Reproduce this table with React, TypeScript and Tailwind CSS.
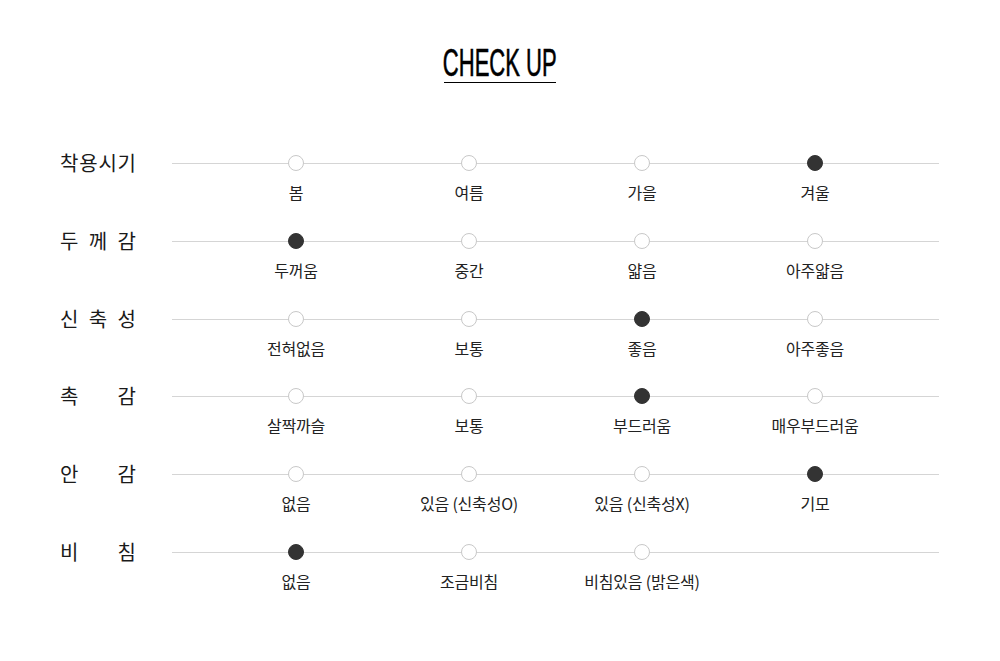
const ROWS: { label: string; options: string[]; selected: number }[] = [
  { label: "착용시기", options: ["봄", "여름", "가을", "겨울"], selected: 3 },
  { label: "두께감", options: ["두꺼움", "중간", "얇음", "아주얇음"], selected: 0 },
  { label: "신축성", options: ["전혀없음", "보통", "좋음", "아주좋음"], selected: 2 },
  { label: "촉감", options: ["살짝까슬", "보통", "부드러움", "매우부드러움"], selected: 2 },
  { label: "안감", options: ["없음", "있음 (신축성O)", "있음 (신축성X)", "기모"], selected: 3 },
  { label: "비침", options: ["없음", "조금비침", "비침있음 (밝은색)"], selected: 0 },
];

const CheckRow = ({ label, options, selected }: { label: string; options: string[]; selected: number }) => (
  <div className="flex items-start h-[77.8px]">
    <div className="w-[76px] ml-[60px] mr-[36px] flex justify-between text-[20px] leading-[24px] text-[#1a1a1a] -mt-[12px]">
      {label.split("").map((ch, i) => (
        <span key={i}>{ch}</span>
      ))}
    </div>
    <div className="relative w-[767px]">
      <div className="absolute left-0 right-0 top-0 h-px bg-[#d5d5d5]" />
      <div className="relative grid grid-cols-[repeat(4,173px)] px-[37.5px] -mt-[8px]">
        {options.map((opt, i) => (
          <div key={opt} className="flex flex-col items-center">
            <div
              className={
                i === selected
                  ? "w-4 h-4 rounded-full bg-[#333] border border-[#333]"
                  : "w-4 h-4 rounded-full bg-white border border-[#c8c8c8]"
              }
            />
            <span className="mt-[9px] text-[16px] leading-[24px] text-[#222] whitespace-nowrap tracking-[-0.2px]">
              {opt}
            </span>
          </div>
        ))}
      </div>
    </div>
  </div>
);

export default function App() {
  return (
    <div
      className="w-[1000px] h-[661px] bg-white"
      style={{ fontFamily: '"Noto Sans CJK KR", "Noto Sans", sans-serif' }}
    >
      <div className="flex justify-center pt-[43px]">
        <div className="border-b-[1.5px] border-black w-[112px] flex justify-center">
          <span
            className="inline-block text-[39px] leading-[39px] text-black scale-x-[0.565] whitespace-nowrap [-webkit-text-stroke:0.6px_black]"
            style={{ fontFamily: '"Liberation Sans", Arial, sans-serif' }}
          >
            CHECK UP
          </span>
        </div>
      </div>
      <div className="pt-[80px]">
        {ROWS.map((r) => (
          <CheckRow key={r.label} {...r} />
        ))}
      </div>
    </div>
  );
}
